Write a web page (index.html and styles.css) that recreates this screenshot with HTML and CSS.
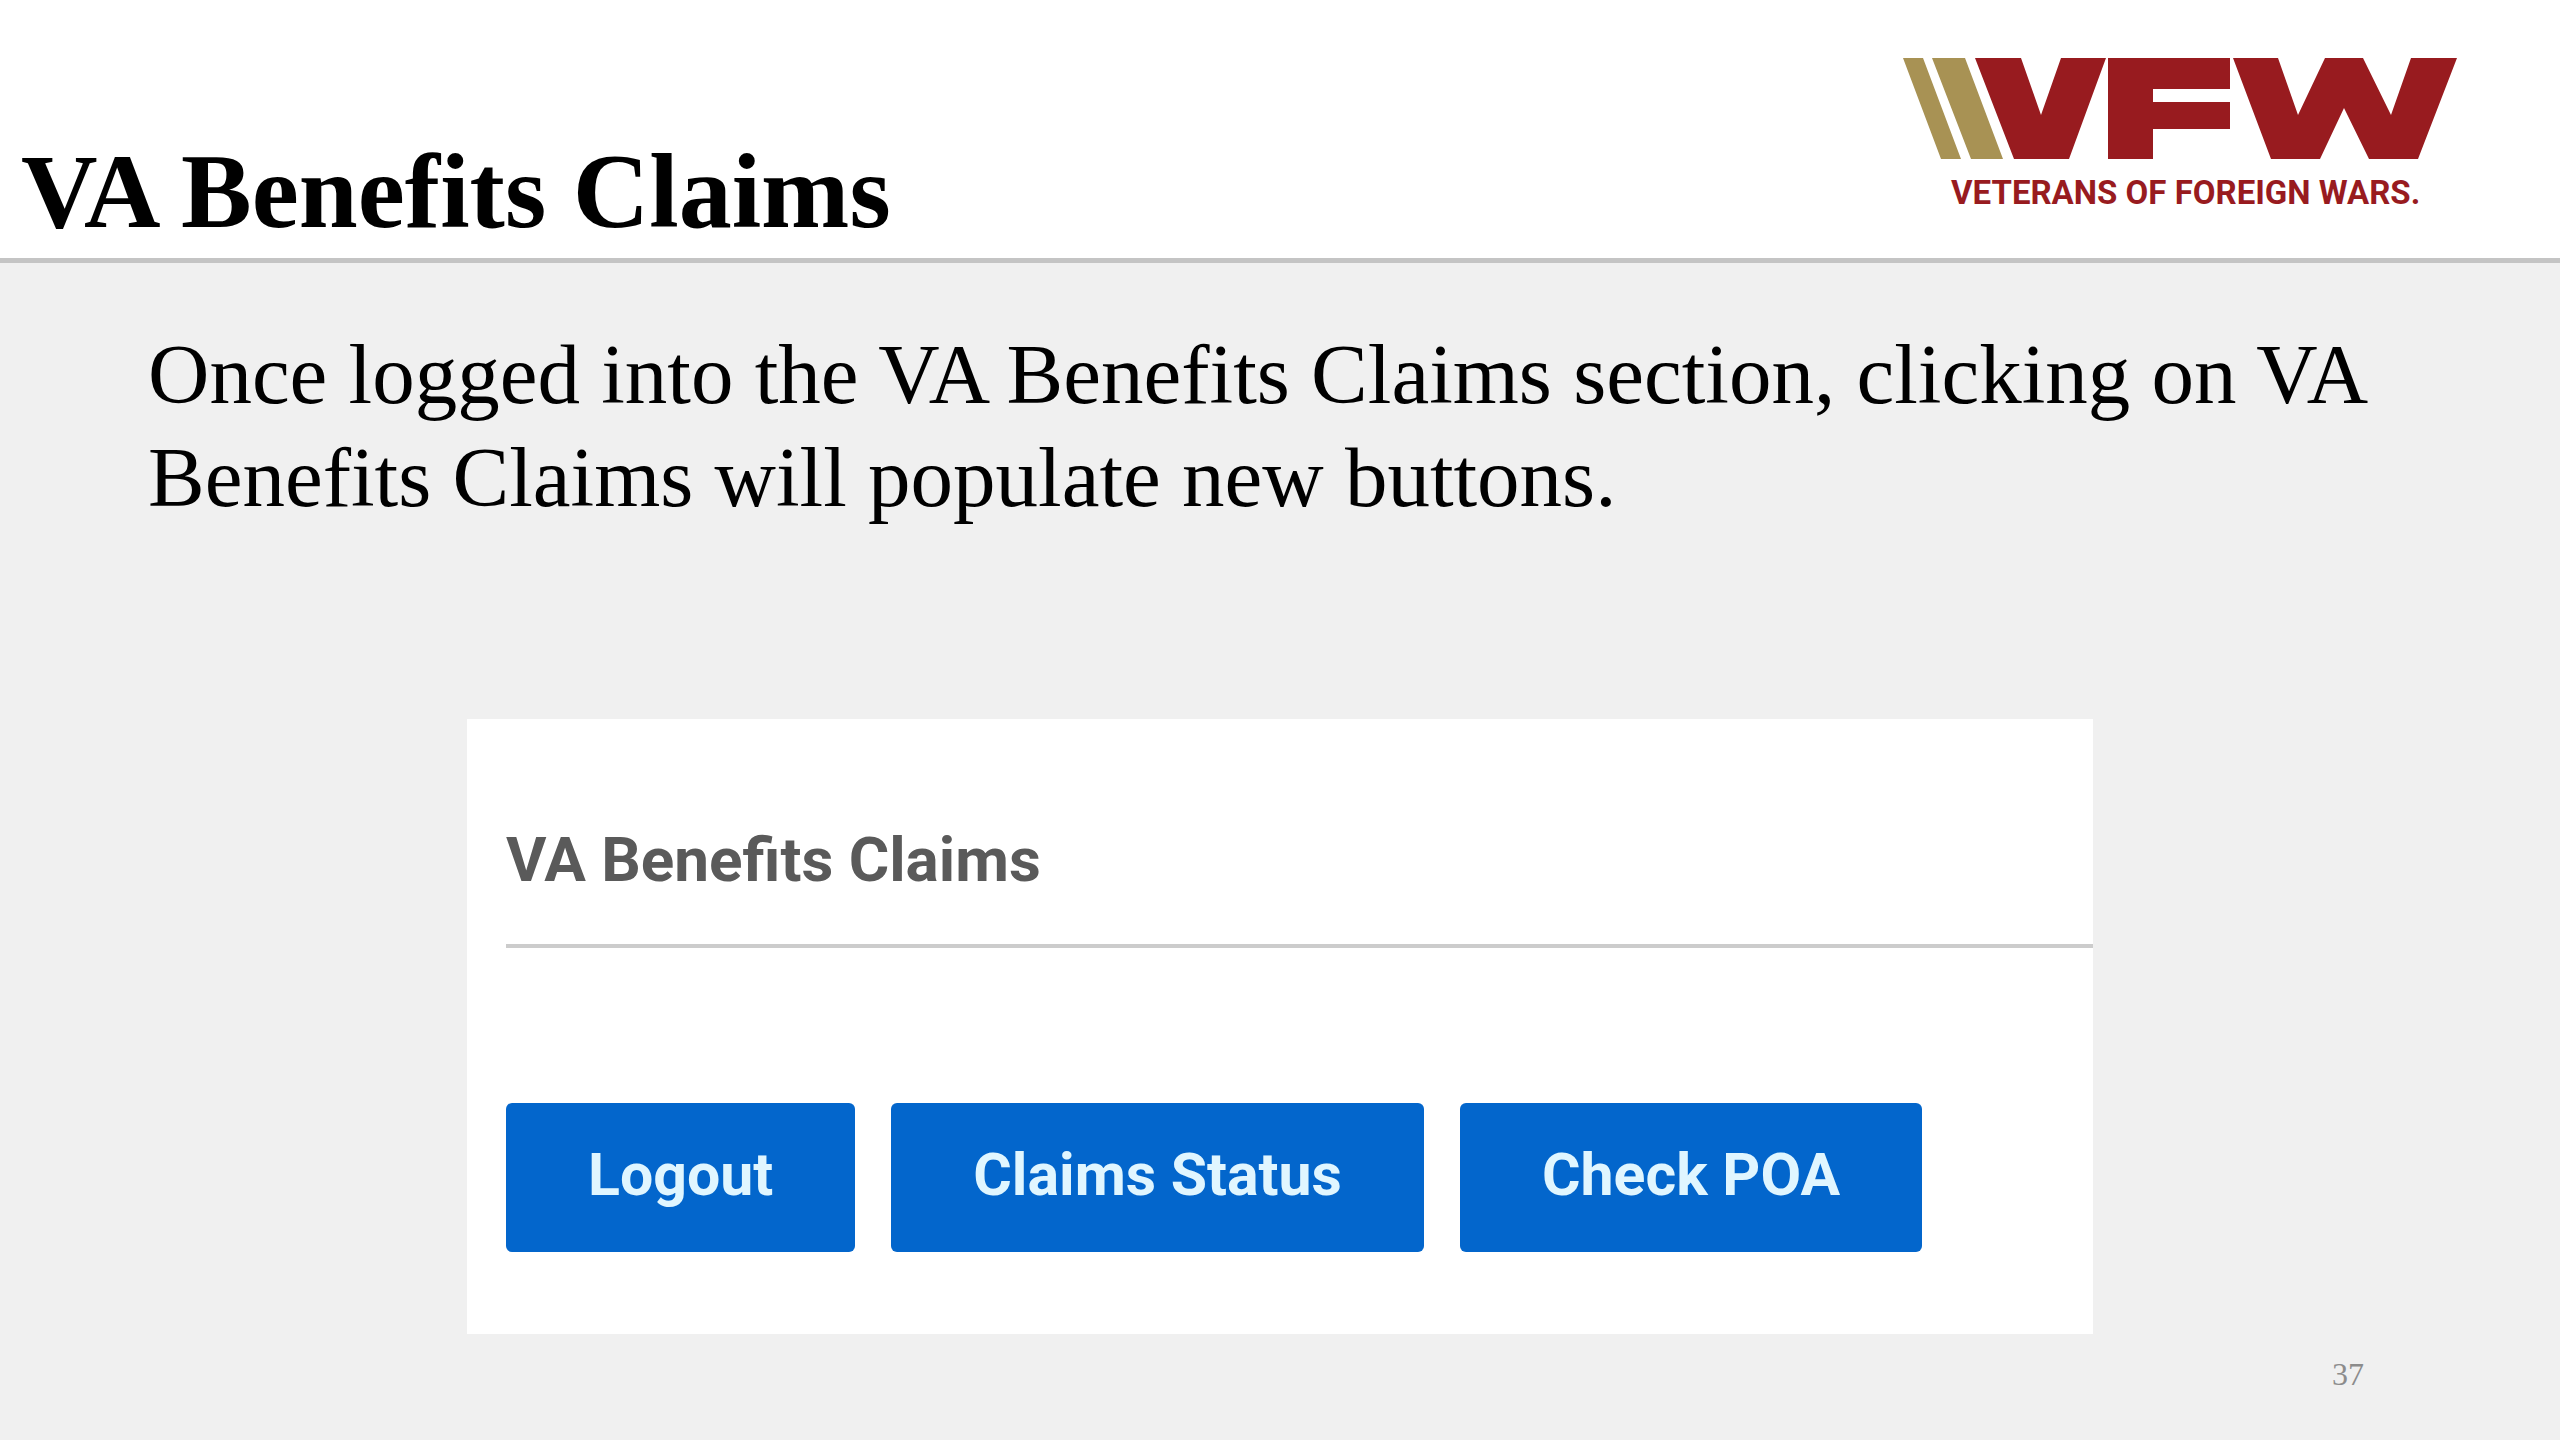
FILE: index.html
```html
<!DOCTYPE html>
<html lang="en">
  <head>
    <meta charset="UTF-8" />
    <meta name="viewport" content="width=device-width, initial-scale=1.0" />
    <title>VA Benefits Claims</title>
    <link rel="stylesheet" href="styles.css">
  </head>

  <body>
    <div class="slide">
      <header class="header">
        <h1>VA Benefits Claims</h1>
        <svg class="logo" viewBox="0 0 554 160" role="img" aria-label="VFW Veterans of Foreign Wars">
          <!-- stripes -->
          <path class="gold" d="M0 0H20L58 101H38Z M29 0H62L100 101H68Z" />
          <!-- V, F, W -->
          <path class="red" d="M72 0H118L138 57L158 0H203L166 101H111Z" />
          <path class="red" d="M205 0H327V31H250V44H327V71H250V101H205Z" />
          <path class="red" d="M330 0H375L395 57L422 0H460L488 57L508 0H554L515 101H466L441 50L417 101H368Z" />
          <text class="caption" x="48" y="146">VETERANS OF FOREIGN WARS.</text>
        </svg>
      </header>

      <main class="content">
        <p class="intro">Once logged into the VA Benefits Claims section, clicking on VA Benefits Claims will populate new buttons.</p>

        <section class="panel">
          <h2>VA Benefits Claims</h2>
          <div class="btnlist">
            <button type="button">Logout</button>
            <button type="button">Claims Status</button>
            <button type="button">Check POA</button>
          </div>
        </section>
      </main>

      <footer class="footer">37</footer>
    </div>
  </body>
</html>
```
FILE: styles.css
```css
* {
  margin: 0;
  padding: 0;
  box-sizing: border-box;
}

body {
  background-color: #f0f0f0;
  font-family: "Liberation Serif", "Times New Roman", serif;
  color: #000;
}

.slide {
  display: flex;
  flex-direction: column;
  min-height: 100vh;
}

.header {
  display: flex;
  justify-content: space-between;
  align-items: flex-end;
  padding: 58px 103px 6px 21px;
  border-bottom: 5px solid #c4c4c4;
  background-color: #fff;
}

.header h1 {
  font-size: 106px;
  line-height: 120px;
}

.logo {
  flex: none;
  align-self: flex-start;
  width: 554px;
  height: 160px;
  margin-bottom: 34px;
}

.logo .gold {
  fill: #a89254;
}

.logo .red {
  fill: #981b1f;
}

.logo .caption {
  fill: #981b1f;
  font-family: Roboto, sans-serif;
  font-size: 33px;
  font-weight: 700;
}

.content {
  flex: 1;
  padding: 60px 148px 0;
}

.intro {
  font-size: 85px;
  line-height: 103px;
}

.panel {
  width: 1626px;
  max-width: 100%;
  margin: 190px auto 0;
  padding: 101px 0 82px 39px;
  background-color: #fff;
  font-family: Roboto, sans-serif;
}

.panel h2 {
  padding-bottom: 44px;
  border-bottom: 4px solid #ccc;
  font-size: 62px;
  font-weight: 700;
  line-height: 80px;
  color: #5a5a5a;
}

.btnlist {
  display: flex;
  flex-wrap: wrap;
  gap: 36px;
  margin-top: 155px;
}

.btnlist button {
  height: 149px;
  padding: 0 82px 6px;
  border: none;
  border-radius: 6px;
  background-color: #0366cc;
  font-family: inherit;
  font-size: 59px;
  font-weight: 700;
  color: #e0f6ff;
  cursor: pointer;
}

.footer {
  padding: 0 196px 48px;
  text-align: right;
  font-size: 32px;
  line-height: 36px;
  color: #8c8c8c;
}
```
